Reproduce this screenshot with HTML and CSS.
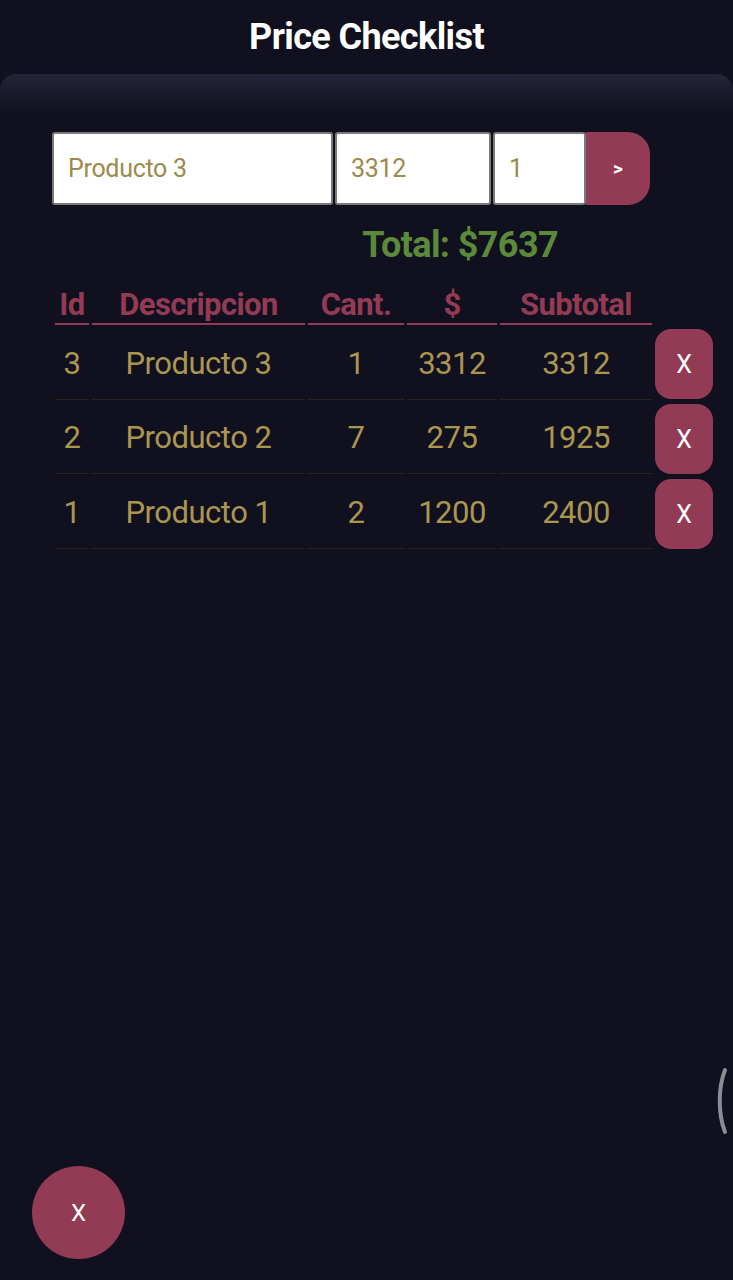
FILE: index.html
```html
<!DOCTYPE html>
<html lang="es">
<head>
<meta charset="utf-8">
<title>Price Checklist</title>
<link rel="stylesheet" href="styles.css">
</head>
<body>
<header class="topbar">
  <h1 class="title">Price Checklist</h1>
</header>
<div class="shade"></div>
<main class="content">
  <form class="entry">
    <input class="field field-desc" type="text" value="Producto 3">
    <input class="field field-price" type="text" value="3312">
    <input class="field field-qty" type="text" value="1">
    <button class="add" type="button">&gt;</button>
  </form>
  <div class="total-row"><span class="total">Total: $7637</span></div>
  <div class="list">
    <table class="items">
      <thead>
        <tr>
          <th class="c-id">Id</th>
          <th class="c-desc">Descripcion</th>
          <th class="c-qty">Cant.</th>
          <th class="c-price">$</th>
          <th class="c-sub">Subtotal</th>
        </tr>
      </thead>
      <tbody>
        <tr><td>3</td><td>Producto 3</td><td>1</td><td>3312</td><td>3312</td></tr>
        <tr><td>2</td><td>Producto 2</td><td>7</td><td>275</td><td>1925</td></tr>
        <tr><td>1</td><td>Producto 1</td><td>2</td><td>1200</td><td>2400</td></tr>
      </tbody>
    </table>
    <div class="removers">
      <button class="remove" type="button">X</button>
      <button class="remove" type="button">X</button>
      <button class="remove" type="button">X</button>
    </div>
  </div>
</main>
<button class="fab" type="button">X</button>
<svg class="edge-handle" width="20" height="72" viewBox="0 0 20 72" aria-hidden="true">
  <path d="M15 4 C 8 22, 8 48, 15 66" fill="none" stroke="#8c8c94" stroke-width="4" stroke-linecap="round"/>
</svg>
</body>
</html>
```

FILE: styles.css
```css
* { box-sizing: border-box; }

html, body {
  margin: 0;
  padding: 0;
  background: #10101f;
  height: 1280px;
  overflow: hidden;
}

body {
  font-family: Roboto, "Noto Sans", "Liberation Sans", sans-serif;
  position: relative;
  color: #a89450;
}

.topbar {
  height: 74px;
  background: #10101e;
  display: flex;
  align-items: center;
  justify-content: center;
}

.title {
  margin: 0;
  color: #ffffff;
  font-size: 36px;
  font-weight: 700;
  letter-spacing: -0.6px;
}

.shade {
  height: 40px;
  border-radius: 16px 16px 0 0;
  background: linear-gradient(#25253a 0%, #1a1a2b 45%, #10101f 100%);
}

.content {
  padding: 18px 20px 0 52px;
}

.entry {
  display: flex;
  height: 73px;
  margin: 0;
}

.field {
  height: 73px;
  border: 2px solid #7a7a7a;
  border-radius: 3px;
  background: #ffffff;
  color: #9c8a4c;
  font-family: inherit;
  font-size: 25px;
  padding: 0 0 0 14px;
  margin: 0 2px 0 0;
  outline: none;
  letter-spacing: -0.3px;
}

.field-desc { width: 281px; }
.field-price { width: 156px; }
.field-qty { width: 93px; margin-right: 0; }

.add {
  width: 64px;
  height: 73px;
  border: none;
  border-radius: 0 22px 22px 0;
  background: #933b54;
  color: #ffffff;
  font-family: inherit;
  font-size: 19px;
  font-weight: 700;
}

.total-row {
  display: flex;
  justify-content: flex-end;
  padding-right: 155px;
  margin-top: 20px;
  height: 40px;
  align-items: center;
}

.total {
  color: #5b8b3a;
  font-size: 36px;
  font-weight: 700;
  letter-spacing: -0.6px;
}

.list {
  display: flex;
  margin-top: 18px;
}

.items {
  border-collapse: separate;
  border-spacing: 3px 0;
  margin-left: 0;
}

.items th {
  color: #933b54;
  font-size: 31px;
  font-weight: 700;
  height: 42px;
  padding: 0 0 1px;
  border-bottom: 2px solid #933b54;
  vertical-align: bottom;
  letter-spacing: -0.6px;
  line-height: 1.1;
}

.c-id { width: 34px; }
.c-desc { width: 213px; }
.c-qty { width: 96px; }
.c-price { width: 90px; }
.c-sub { width: 152px; }

.items td {
  height: 74px;
  text-align: center;
  font-size: 31px;
  color: #ab9650;
  border-bottom: 1px solid #26271e;
  padding: 3px 0 0;
  letter-spacing: -0.5px;
}

.removers {
  display: flex;
  flex-direction: column;
  padding-top: 46px;
  gap: 5px;
  margin-left: 0;
}

.remove {
  width: 58px;
  height: 70px;
  border: none;
  border-radius: 16px;
  background: #933b54;
  color: #ffffff;
  font-family: inherit;
  font-size: 25px;
}

.fab {
  position: absolute;
  left: 32px;
  top: 1166px;
  width: 93px;
  height: 93px;
  border: none;
  border-radius: 50%;
  background: #933b54;
  color: #ffffff;
  font-family: inherit;
  font-size: 24px;
}

.edge-handle {
  position: absolute;
  right: 3px;
  top: 1066px;
}
```
